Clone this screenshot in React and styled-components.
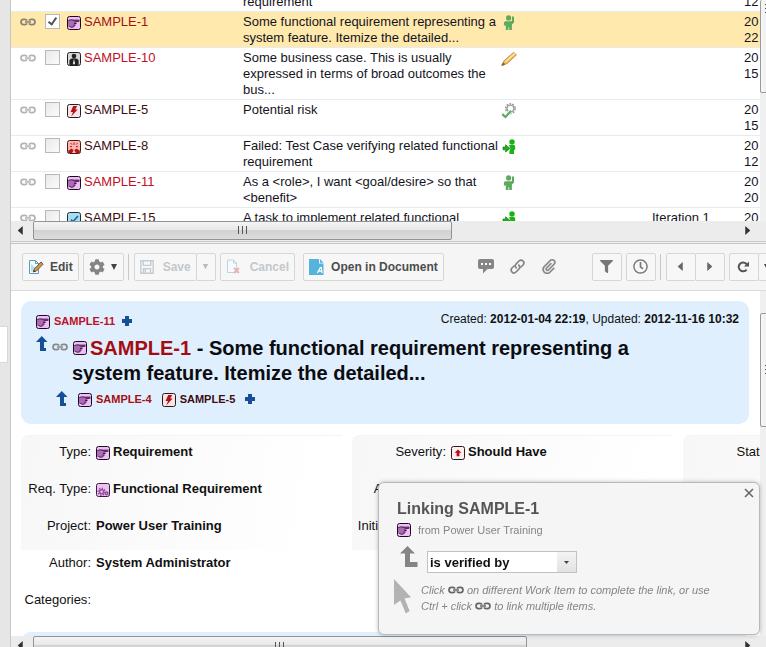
import React from "react";
import styled, { createGlobalStyle, css } from "styled-components";
import { ImAttachment } from "react-icons/im";
import { FaFilter, FaRegClock, FaCog } from "react-icons/fa";

const GlobalStyle = createGlobalStyle`
  *, *::before, *::after { box-sizing: border-box; }
  body {
    margin: 0;
    background: #fff;
    color: #111;
    font: 13px/16px "Liberation Sans", Arial, sans-serif;
  }
  button, input, select { font-family: inherit; margin: 0; }
  svg { display: block; flex: none; }
`;

/* ---------- shell ---------- */

const Page = styled.div`
  display: flex;
  height: 100vh;
  overflow: hidden;
`;

const Rail = styled.aside`
  flex: 0 0 11px;
  display: flex;
  flex-direction: column;
  background: #e6e6e6;
  border-right: 1px solid #c6c6c6;
  padding-top: 326px;
`;

const RailHandle = styled.button`
  width: 8px;
  height: 37px;
  padding: 0;
  border: 1px solid #d8d8d8;
  border-left: 0;
  background: #fff;
`;

const Main = styled.main`
  flex: 1;
  min-width: 0;
  display: flex;
  flex-direction: column;
  overflow: hidden;
`;

const ListPane = styled.section`
  flex: 243 1 0;
  min-height: 0;
  display: flex;
  flex-direction: column;
  border-bottom: 1px solid #c4c4c4;
`;

const DetailPane = styled.section`
  flex: 404 1 0;
  min-height: 0;
  display: flex;
  flex-direction: column;
`;

const PaneBody = styled.div`
  flex: 1;
  min-height: 0;
  display: flex;
`;

const Viewport = styled.div`
  flex: 1;
  min-width: 0;
  overflow: hidden;
  background: #fff;
`;

/* ---------- scroll bars ---------- */

const VTrack = styled.div`
  flex: 0 0 6px;
  background: #f0f0f0;
  padding-top: ${(p) => p.$start}px;
  overflow: hidden;
`;

const VThumb = styled.div`
  height: ${(p) => p.$size}px;
  width: 17px;
  display: flex;
  flex-direction: column;
  align-items: flex-start;
  justify-content: ${(p) => (p.$top ? "flex-start" : "center")};
  padding: ${(p) => (p.$top ? "3px" : "0")} 0 0 4px;
  border: 1px solid #9a9a9a;
  border-top-width: ${(p) => (p.$top ? 0 : 1)}px;
  border-radius: 2px;
  background: linear-gradient(to right, #f6f6f6, #e6e6e6);
`;

const HTrack = styled.div`
  flex: 0 0 ${(p) => p.$height}px;
  display: flex;
  background: #ececec;
  overflow: hidden;
  border-bottom: ${(p) => (p.$line ? "1px solid #c9c9c9" : "0")};
`;

const Seam = styled.div`
  flex: 0 0 1px;
  background: #f1f1f1;
`;

const ScrollButton = styled.button`
  flex: 0 0 22px;
  height: 19px;
  padding: 0 3px 0 0;
  border: 0;
  background: transparent;
  display: flex;
  align-items: center;
  justify-content: center;
`;

const HLane = styled.div`
  flex: 1;
  min-width: 0;
`;

const HThumb = styled.div`
  width: ${(p) => p.$size}%;
  height: 19px;
  display: flex;
  align-items: center;
  justify-content: center;
  border: 1px solid #8f9499;
  border-radius: 2px;
  background: linear-gradient(#f4f4f4 0, #e8e8e8 45%, #d2d2d2 50%, #dcdcdc 100%);
`;

const Corner = styled.div`
  flex: 0 0 6px;
`;

function Grip({ vertical }) {
  return (
    <svg width={vertical ? 8 : 11} height={vertical ? 11 : 8} stroke="#555" strokeWidth="1">
      <path d={vertical ? "M0 1.5H8M0 5.5H8M0 9.5H8" : "M1.5 0V8M5.5 0V8M9.5 0V8"} />
    </svg>
  );
}

function Triangle({ dir = "down", size = 8, color = "#333" }) {
  const d = {
    left: "M6 0 1.5 4 6 8Z",
    right: "M2 0 6.5 4 2 8Z",
    down: "M1 1H7L4 7Z",
  }[dir];
  return (
    <svg width={size} height={size} viewBox="0 0 8 8">
      <path d={d} fill={color} />
    </svg>
  );
}

function HScroll({ height, size, line }) {
  return (
    <HTrack $height={height} $line={line}>
      <ScrollButton aria-label="Scroll left">
        <Triangle dir="left" size={9} />
      </ScrollButton>
      <HLane>
        <HThumb $size={size}>
          <Grip />
        </HThumb>
      </HLane>
      <ScrollButton aria-label="Scroll right">
        <Triangle dir="right" size={9} />
      </ScrollButton>
      <Corner />
    </HTrack>
  );
}

/* ---------- icons ---------- */

function ChainIcon({ color = "#b3b3b3" }) {
  return (
    <svg width="16" height="8" viewBox="0 0 16 8" fill="none" stroke={color} strokeWidth="1.7">
      <path d="M7 2.6C6.6 1.6 5.8 1.4 4.8 1.4H3.6C1.9 1.4 1 2.6 1 4s.9 2.6 2.6 2.6h1.2C5.8 6.6 6.6 6.4 7 5.4" />
      <path d="M9 2.6C9.4 1.6 10.2 1.4 11.2 1.4h1.2C14.1 1.4 15 2.6 15 4s-.9 2.6-2.6 2.6h-1.2C10.2 6.6 9.4 6.4 9 5.4" />
      <path d="M5 4h6" strokeWidth="1.5" />
    </svg>
  );
}

const tiles = {
  requirement: ["#eebff4", "#1d0a22"],
  functional: ["#eac4f0", "#3d1b45"],
  business: ["#d6d6d6", "#222"],
  risk: ["#f6e6e6", "#2a1a1a"],
  test: ["#f9b8b4", "#5a1414"],
  task: ["#a8dcf2", "#17323f"],
  severity: ["#fbefef", "#2a1a1a"],
};

function TypeIcon({ kind }) {
  const [fill, edge] = tiles[kind];
  return (
    <svg width="14" height="14" viewBox="0 0 14 14">
      <rect x=".5" y=".5" width="13" height="13" rx="2" fill={fill} stroke={edge} />
      {kind === "requirement" && (
        <g>
          <path d="M1 4.2 3.4 4 5 3.6 12.4 4V5.2L9.4 5.8V7.2L8.4 8.8 7.2 10.4 4.6 11.4 1 10.4Z" fill="#ab6cb3" />
          <path d="M1.4 4.6 3.6 3.8 7 4.3 12.4 4.1M12.4 5.2 7.4 5.9M7 7.5H9.6M6.4 9.2H8.6M2.4 10.4 4.6 11.3 7.4 10.6" fill="none" stroke="#3b1442" strokeWidth=".9" />
        </g>
      )}
      {kind === "functional" && (
        <g fill="none" stroke="#98509f">
          <circle cx="5.6" cy="8.8" r="3.4" strokeWidth="1.6" strokeDasharray="1.4 1.2" />
          <circle cx="5.6" cy="8.8" r="2" strokeWidth="1.6" />
          <circle cx="10.6" cy="10.4" r="1.3" strokeWidth="1.6" />
        </g>
      )}
      {kind === "business" && (
        <g fill="#222">
          <circle cx="7" cy="4" r="2.3" />
          <path d="M2.4 13V8.8C2.6 7 4 6.2 7 6.2s4.4.8 4.6 2.6V13Z" />
          <path d="M7 7 5.9 11.4 7 12.8 8.1 11.4Z" fill="#eee" />
        </g>
      )}
      {kind === "risk" && <path d="M6.2 2H10.2L8.2 5.6H10.6L4.2 12.6 6 8H3.6Z" fill="#b80f16" />}
      {kind === "test" && (
        <g fill="none" stroke="#c01818">
          <path d="M3.5 3 5 4.6M7 2.4v2.4M10.5 3 9 4.6M3 6.6h2M9 6.6h2" strokeWidth="1" />
          <path d="M1.2 13v-2.2L4.6 8.4 6.6 10.2 5 13ZM12.8 13v-2.2L9.4 8.4 7.4 10.2 9 13Z" fill="#b01818" stroke="none" />
        </g>
      )}
      {kind === "task" && <path d="m4 7.5 2 2.2L11 4" fill="none" stroke="#246d92" strokeWidth="1.7" />}
      {kind === "severity" && <path d="M7 3.4 10.4 6.8H8.4v3.4H5.6V6.8H3.6Z" fill="#b80f16" />}
    </svg>
  );
}

function StatusIcon({ kind }) {
  return (
    <svg width="16" height="16" viewBox="0 0 16 16">
      {kind === "person" && (
        <g fill="#5cab5c">
          <circle cx="7.6" cy="2.9" r="2.6" />
          <path d="M4.6 6.2H10.6L11 5.6V1.6H13V7.4L10.9 9.4V15H8.2V12.2H7.4V15H4.8V10.6H2.9V7.6Q3.2 6.4 4.6 6.2Z" />
        </g>
      )}
      {kind === "pencil" && (
        <g>
          <path d="m1.8 13 .8-2.8L12.6 1.4l2.8 2.5L5.8 12.8Z" fill="#f0bc62" stroke="#c58a35" strokeWidth=".9" />
          <path d="m4.6 10.6 9-8" stroke="#fff0bd" strokeWidth="1.2" />
          <path d="M0 14.4 2 11.4l2.4 2.2-2.4 1.2Z" fill="#8a6238" />
        </g>
      )}
      {kind === "review" && (
        <g fill="none">
          <circle cx="9.4" cy="5.6" r="4.8" stroke="#999" strokeWidth="1.5" strokeDasharray="1.8 1.2" />
          <circle cx="9.4" cy="5.6" r="3.5" stroke="#999" strokeWidth="1.4" />
          <path d="M1.2 11.2 4.4 14 10.2 7.8" stroke="#fff" strokeWidth="3.6" />
          <path d="M1.2 11.2 4.4 14 10.2 7.8" stroke="#5fae61" strokeWidth="2.3" />
        </g>
      )}
      {kind === "assigned" && (
        <g fill="#19b219">
          <circle cx="11" cy="3" r="2.7" />
          <path d="M8 6H13.2Q14.2 6.4 14.2 8V10.8H13V15H8.4V12.4L9.4 9.6Z" />
          <path d="M2 8H4.6V5.8L9 9.4 4.6 13v-2.2H2Z" stroke="#117a11" strokeWidth=".7" />
        </g>
      )}
    </svg>
  );
}

function PlusIcon() {
  return (
    <svg width="10" height="10" viewBox="0 0 10 10">
      <path d="M3 0h4v3h3v4H7v3H3V7H0V3h3Z" fill="#174f96" />
    </svg>
  );
}

function UpArrow({ color = "#174f96", wide }) {
  return wide ? (
    <svg width="19" height="21" viewBox="0 0 19 21">
      <path d="M8.5 0 16 7.5H11V16H18.5v5H6V7.5H1Z" fill={color} />
    </svg>
  ) : (
    <svg width="12" height="15" viewBox="0 0 12 15">
      <path d="M5.8 0 11.5 6H8V12h2v3H4V6H0Z" fill={color} />
    </svg>
  );
}

function EditIcon() {
  return (
    <svg width="16" height="16" viewBox="0 0 16 16">
      <path d="M1.5 1.5h6l3 3v10h-9Z" fill="#f3fbff" stroke="#5c9dbd" />
      <path d="M7.5 1.5v3h3" fill="none" stroke="#5c9dbd" />
      <path d="M3 12.5V5l5 4-3 3.5Z" fill="#b9def0" />
      <path d="m5.5 12.8.8-2.8L13 3l2.2 2.1-6.8 7Z" fill="#cf9745" stroke="#66503a" strokeWidth=".9" />
      <path d="m5 13.3 1-2.3 1.4 1.5Z" fill="#333" />
    </svg>
  );
}

function SaveIcon() {
  return (
    <svg width="14" height="14" viewBox="0 0 14 14" fill="none" stroke="#c3ccd2" strokeWidth="1.4">
      <path d="M.8.8h12.4v12.4H.8Z" />
      <path d="M3.2 1v4.4h7.6V1M3.5 13V8.6h7V13M5.4 9v3.6" />
    </svg>
  );
}

function CancelIcon() {
  return (
    <svg width="14" height="15" viewBox="0 0 14 15" fill="none">
      <path d="M1.5 1h6l3 3v9.5h-9Z" fill="#f5fafc" stroke="#c3d3da" />
      <path d="M7.5 1v3h3" stroke="#c3d3da" />
      <path d="m8 9 5 5M13 9l-5 5" stroke="#e6b3b3" strokeWidth="1.8" />
    </svg>
  );
}

function DocumentIcon() {
  return (
    <svg width="15" height="16" viewBox="0 0 15 16">
      <path d="M0 0h10v4.6h4.5V16H0Z" fill="#56b3dc" />
      <path d="M11 0 14.5 3.8H11Z" fill="#56b3dc" />
      <path d="m8.4 14 2.9-5.4h1l.7 5.4M9.6 12.2h3.2" fill="none" stroke="#fff" strokeWidth="1.2" />
    </svg>
  );
}

function CommentIcon() {
  return (
    <svg width="16" height="15" viewBox="0 0 16 15">
      <path d="M2 0h12q2 0 2 2v6q0 2-2 2H9.5L5 14.5V10H2Q0 10 0 8V2Q0 0 2 0Z" fill="#858585" />
      <path d="M3 4h2v2H3ZM7 4h2v2H7ZM11 4h2v2h-2Z" fill="#fff" />
    </svg>
  );
}

function LinkIcon() {
  return (
    <svg width="15" height="15" viewBox="0 0 15 15" fill="none" stroke="#858585" strokeWidth="1.7" strokeLinecap="round">
      <path d="M6.2 8.8C5 7.6 5.1 6 6.2 4.9L9 2C10.2.8 11.8.8 12.9 1.9S14.1 4.8 13 6L11 8" />
      <path d="M8.8 6.2C10 7.4 9.9 9 8.8 10.1L6 13C4.8 14.2 3.2 14.2 2.1 13.1S.9 10.2 2 9L4 7" />
    </svg>
  );
}

function RefreshIcon() {
  return (
    <svg width="13" height="12" viewBox="0 0 13 12">
      <path d="M9.6 8.6A4.4 4.4 0 1 1 9.2 2.8L10 3.6" fill="none" stroke="#555" strokeWidth="2" />
      <path d="M12 .4V5.4H7Z" fill="#555" />
    </svg>
  );
}

function CursorIcon() {
  return (
    <svg width="18" height="35" viewBox="0 0 18 35">
      <path d="M0 0 17 18.2 10.6 19.5 15.6 32 11.8 34.5 6.4 21.6 0 26Z" fill="#b3b3b3" />
    </svg>
  );
}

/* ---------- work item list ---------- */

const Table = styled.table`
  table-layout: fixed;
  width: 828px;
  margin-top: -24px;
  border-collapse: separate;
  border-spacing: 0;
`;

const Row = styled.tr`
  background: ${(p) => (p.$selected ? "#ffe9ad" : "#fff")};
`;

const Cell = styled.td`
  padding: 2px 0 1px ${(p) => p.$inset || 0}px;
  border-bottom: 1px solid #e6ebee;
  vertical-align: top;
  color: #14141c;
`;

const IconSlot = styled.span`
  display: flex;
  padding-top: ${(p) => p.$top || 0}px;
`;

const Check = styled.input`
  appearance: none;
  display: block;
  width: 15px;
  height: 15px;
  border: 1px solid #b9b9b9;
  background: linear-gradient(135deg, #e9e9e9, #fbfbfb);

  &:checked { background: #fff; }
  &:checked::after {
    content: "";
    display: block;
    width: 5px;
    height: 9px;
    margin: 1px 0 0 4px;
    border: solid #555;
    border-width: 0 2px 2px 0;
    transform: rotate(35deg);
  }
`;

const tones = { red: "#c00f26", dark: "#a31014", maroon: "#3d0d12" };

const ItemLink = styled.a`
  display: inline-flex;
  align-items: center;
  gap: ${(p) => (p.$bold ? 4 : 3)}px;
  color: ${(p) => tones[p.$tone]};
  text-decoration: none;
  ${(p) => p.$bold && css`font-size: 11px; font-weight: bold;`}

  svg { margin-top: 2px; }
`;

const rows = [
  { id: "SAMPLE-4", kind: "requirement", tone: "dark", title: "A functional requirement that derives a new requirement", status: "person", date: ["20", "12"] },
  { id: "SAMPLE-1", kind: "requirement", tone: "dark", title: "Some functional requirement representing a system feature. Itemize the detailed...", status: "person", date: ["20", "22"], selected: true },
  { id: "SAMPLE-10", kind: "business", tone: "red", title: "Some business case. This is usually expressed in terms of broad outcomes the bus...", status: "pencil", date: ["20", "15"] },
  { id: "SAMPLE-5", kind: "risk", tone: "maroon", title: "Potential risk", status: "review", date: ["20", "15"] },
  { id: "SAMPLE-8", kind: "test", tone: "maroon", title: "Failed: Test Case verifying related functional requirement", status: "assigned", date: ["20", "12"] },
  { id: "SAMPLE-11", kind: "requirement", tone: "red", title: "As a <role>, I want <goal/desire> so that <benefit>", status: "person", date: ["20", "20"] },
  { id: "SAMPLE-15", kind: "task", tone: "maroon", title: "A task to implement related functional requirement", status: "assigned", iteration: "Iteration 1", date: ["20", "12"] },
];

function ItemTable() {
  return (
    <Table>
      <colgroup>
        {[34, 22, 176, 258, 151, 92, 95].map((w, i) => (
          <col key={i} width={w} />
        ))}
      </colgroup>
      <tbody>
        {rows.map((r) => (
          <Row key={r.id} $selected={r.selected}>
            <Cell $inset={9}>
              <IconSlot $top={4}>
                <ChainIcon color={r.selected ? "#8b8272" : undefined} />
              </IconSlot>
            </Cell>
            <Cell>
              <Check type="checkbox" aria-label={`Select ${r.id}`} defaultChecked={r.selected} />
            </Cell>
            <Cell>
              <ItemLink href="#" $tone={r.tone}>
                <TypeIcon kind={r.kind} />
                {r.id}
              </ItemLink>
            </Cell>
            <Cell>{r.title}</Cell>
            <Cell>
              <IconSlot $top={1}>
                <StatusIcon kind={r.status} />
              </IconSlot>
            </Cell>
            <Cell>{r.iteration}</Cell>
            <Cell>
              {r.date[0]}
              <br />
              {r.date[1]}
            </Cell>
          </Row>
        ))}
      </tbody>
    </Table>
  );
}

/* ---------- toolbar ---------- */

const Toolbar = styled.div`
  flex: none;
  display: flex;
  align-items: center;
  gap: 4px;
  padding: 9px 0 9px 11px;
  background: #f5f5f5;
  border-bottom: 1px solid #dcdcdc;
  overflow: hidden;
`;

const Button = styled.button`
  flex: none;
  display: flex;
  align-items: center;
  justify-content: center;
  gap: ${(p) => p.$gap || 6}px;
  min-width: 30px;
  height: 28px;
  padding: 0 ${(p) => (p.$icon ? 0 : 5)}px;
  border: 1px solid #d6d6d6;
  border-radius: 2px;
  background: #f7f7f7;
  color: #4d4d4d;
  font-size: 12px;
  font-weight: bold;
  white-space: nowrap;

  &:disabled { color: #c3c8cc; }
`;

const Joined = styled.div`
  flex: none;
  display: flex;

  ${Button} + ${Button} {
    margin-left: -1px;
    min-width: ${(p) => p.$tail || 30}px;
  }
`;

const PlainButton = styled.button`
  flex: none;
  display: flex;
  align-items: center;
  justify-content: center;
  width: 16px;
  padding: 0;
  border: 0;
  background: transparent;
  color: #858585;
`;

const PlainGroup = styled.div`
  flex: none;
  display: flex;
  align-items: center;
  gap: 16px;
  margin: 0 30px;
`;

const Divider = styled.span`
  flex: none;
  width: 1px;
  height: 26px;
  margin-right: 1px;
  background: #c8c8c8;
`;

const DocumentButton = styled(Button)`
  margin-left: 4px;
`;

function ActionBar() {
  return (
    <Toolbar role="toolbar" aria-label="Work item actions">
      <Button><EditIcon />Edit</Button>
      <Button $gap={5} aria-label="Actions">
        <FaCog size={16} color="#858585" />
        <Triangle color="#444" />
      </Button>
      <Divider />
      <Joined $tail={20}>
        <Button disabled $gap={9}><SaveIcon />Save</Button>
        <Button disabled $icon aria-label="Save options"><Triangle color="#bbb" size={7} /></Button>
      </Joined>
      <Button disabled $gap={10}><CancelIcon />Cancel</Button>
      <DocumentButton $gap={7}><DocumentIcon />Open in Document</DocumentButton>
      <PlainGroup>
        <PlainButton aria-label="Comments"><CommentIcon /></PlainButton>
        <PlainButton aria-label="Links"><LinkIcon /></PlainButton>
        <PlainButton aria-label="Attachments"><ImAttachment size={15} stroke="#858585" strokeWidth="0.4" /></PlainButton>
      </PlainGroup>
      <Button $icon aria-label="Filter"><FaFilter size={13} color="#777" /></Button>
      <Button $icon aria-label="History"><FaRegClock size={15} color="#777" /></Button>
      <Divider />
      <Joined>
        <Button $icon aria-label="Previous"><Triangle dir="left" size={9} color="#666" /></Button>
        <Button $icon aria-label="Next"><Triangle dir="right" size={9} color="#666" /></Button>
      </Joined>
      <Joined $tail={18}>
        <Button $icon aria-label="Refresh"><RefreshIcon /></Button>
        <Button $icon aria-label="Refresh options"><Triangle color="#444" /></Button>
      </Joined>
    </Toolbar>
  );
}

/* ---------- detail ---------- */

const Header = styled.header`
  margin: 10px 11px 11px 10px;
  padding: 10px 10px 15px 15px;
  border-radius: 10px;
  background: #dfeffd;
`;

const HeaderLine = styled.div`
  display: flex;
  align-items: center;
  gap: ${(p) => p.$gap || 7}px;
  height: 20px;
  padding-left: ${(p) => p.$indent || 0}px;
`;

const Dates = styled.p`
  margin: 0 0 4px auto;
  font-size: 12px;
  white-space: nowrap;
`;

const TitleRow = styled.div`
  display: flex;
  align-items: flex-start;
  gap: 4px;
  margin: 5px 0 3px;
`;

const Title = styled.h1`
  margin: 0;
  max-width: 600px;
  font-size: 20px;
  line-height: 25px;
  color: #0c0c10;

  a { color: #a30d12; text-decoration: none; }
  svg { display: inline-block; margin: 0 3px 0 1px; vertical-align: 0; }
`;

const Fields = styled.div`
  display: grid;
  grid-template-columns: repeat(3, minmax(321px, 1fr));
  gap: 10px;
  margin-left: 10px;
`;

const FieldCard = styled.dl`
  margin: 0;
  display: grid;
  grid-template-columns: ${(p) => p.$label}px 1fr;
  grid-auto-rows: 37px;
  column-gap: 5px;
  border-top: 1px solid #f3f3f3;
  border-radius: 8px 0 0 0;
  background: linear-gradient(100deg, #f7f7f7, #fff 90%) no-repeat 0 0 / 100% 114px;
`;

const Label = styled.dt`
  padding-top: 8px;
  text-align: right;
  white-space: nowrap;
`;

const Value = styled.dd`
  display: flex;
  gap: 3px;
  margin: 0;
  padding-top: 8px;
  font-weight: bold;
  white-space: nowrap;

  svg { margin-top: 2px; }
`;

const NextSection = styled.div`
  margin: 11px 11px 0 10px;
  height: 60px;
  border-radius: 10px;
  background: #dfeffd;
`;

function FieldGroup({ label, items }) {
  return (
    <FieldCard $label={label}>
      {items.map(([name, value, icon]) => (
        <React.Fragment key={name}>
          <Label>{name}:</Label>
          <Value>
            {icon && <TypeIcon kind={icon} />}
            {value}
          </Value>
        </React.Fragment>
      ))}
    </FieldCard>
  );
}

/* ---------- linking dialog ---------- */

const Dialog = styled.section`
  position: fixed;
  right: 6px;
  bottom: 12px;
  width: 382px;
  padding: 16px 18px 20px;
  border: 1px solid #b9b9b9;
  border-radius: 6px;
  background: #f5f5f5;
  box-shadow: 0 0 4px rgba(0, 0, 0, 0.25);
  color: #858585;
  font-size: 11px;
`;

const CloseButton = styled.button`
  position: absolute;
  top: 5px;
  right: 5px;
  padding: 0;
  border: 0;
  background: transparent;
`;

const DialogTitle = styled.h2`
  margin: 0;
  font-size: 16px;
  line-height: 20px;
  color: #555;
`;

const Source = styled.p`
  display: flex;
  gap: 7px;
  margin: 3px 0 0;

  svg { margin-top: 1px; }
`;

const RoleRow = styled.div`
  display: flex;
  align-items: flex-start;
  gap: 9px;
  margin: 5px 0 6px 2px;
`;

const SelectBox = styled.div`
  position: relative;
  width: 150px;
  margin-top: 8px;
`;

const Select = styled.select`
  appearance: none;
  display: block;
  width: 100%;
  height: 22px;
  padding: 0 22px 0 2px;
  border: 1px solid #c2c2c2;
  border-radius: 0;
  background: #fff;
  color: #111;
  font-size: 13px;
  font-weight: bold;
`;

const SelectArrow = styled.span`
  position: absolute;
  top: 1px;
  right: 1px;
  bottom: 1px;
  width: 19px;
  display: flex;
  align-items: center;
  justify-content: center;
  background: linear-gradient(#f4f4f4, #e2e2e2);
  pointer-events: none;
`;

const Hint = styled.div`
  display: flex;
  gap: 9px;
  margin-left: -3px;

  p { margin: 3px 0 0; font-style: italic; white-space: nowrap; }
  p svg { display: inline-block; vertical-align: 0; }
`;

function LinkingDialog() {
  return (
    <Dialog role="dialog" aria-label="Linking SAMPLE-1">
      <CloseButton aria-label="Close">
        <svg width="10" height="10" viewBox="0 0 10 10" stroke="#666" strokeWidth="1.6">
          <path d="m1 1 8 8M9 1 1 9" />
        </svg>
      </CloseButton>
      <DialogTitle>Linking SAMPLE-1</DialogTitle>
      <Source><TypeIcon kind="requirement" />from Power User Training</Source>
      <RoleRow>
        <IconSlot $top={3}><UpArrow wide color="#858585" /></IconSlot>
        <SelectBox>
          <Select aria-label="Link role" defaultValue="is verified by">
            <option>is verified by</option>
          </Select>
          <SelectArrow>
            <svg width="5" height="3"><path d="M0 0H5L2.5 3Z" fill="#444" /></svg>
          </SelectArrow>
        </SelectBox>
      </RoleRow>
      <Hint>
        <CursorIcon />
        <p>
          Click <ChainIcon color="#666" /> on different Work Item to complete the link, or use
          <br />
          Ctrl + click <ChainIcon color="#666" /> to link multiple items.
        </p>
      </Hint>
    </Dialog>
  );
}

export default function App() {
  return (
    <Page>
      <GlobalStyle />
      <Rail><RailHandle aria-label="Expand navigation" /></Rail>
      <Main>
        <ListPane>
          <PaneBody>
            <Viewport><ItemTable /></Viewport>
            <VTrack $start={0}><VThumb $size={93} $top><Grip vertical /></VThumb></VTrack>
          </PaneBody>
          <HScroll height={21} size={59.5} line />
          <Seam />
        </ListPane>
        <DetailPane>
          <ActionBar />
          <PaneBody>
            <Viewport>
              <Header>
                <HeaderLine>
                  <ItemLink href="#" $tone="red" $bold><TypeIcon kind="requirement" />SAMPLE-11</ItemLink>
                  <PlusIcon />
                  <Dates>Created: <b>2012-01-04 22:19</b>, Updated: <b>2012-11-16 10:32</b></Dates>
                </HeaderLine>
                <TitleRow>
                  <UpArrow />
                  <IconSlot $top={7}><ChainIcon color="#888" /></IconSlot>
                  <Title>
                    <TypeIcon kind="requirement" />
                    <a href="#">SAMPLE-1</a> - Some functional requirement representing a system feature. Itemize the detailed...
                  </Title>
                </TitleRow>
                <HeaderLine $indent={20} $gap={10}>
                  <UpArrow />
                  <ItemLink href="#" $tone="dark" $bold><TypeIcon kind="requirement" />SAMPLE-4</ItemLink>
                  <ItemLink href="#" $tone="maroon" $bold><TypeIcon kind="risk" />SAMPLE-5</ItemLink>
                  <PlusIcon />
                </HeaderLine>
              </Header>
              <Fields>
                <FieldGroup
                  label={70}
                  items={[
                    ["Type", "Requirement", "requirement"],
                    ["Req. Type", "Functional Requirement", "functional"],
                    ["Project", "Power User Training"],
                    ["Author", "System Administrator"],
                    ["Categories", ""],
                  ]}
                />
                <FieldGroup
                  label={94}
                  items={[
                    ["Severity", "Should Have", "severity"],
                    ["Assignee(s)", ""],
                    ["Initial Estimate", ""],
                  ]}
                />
                <FieldGroup label={94} items={[["Status", ""]]} />
              </Fields>
              <NextSection />
            </Viewport>
            <VTrack $start={22}><VThumb $size={114}><Grip vertical /></VThumb></VTrack>
          </PaneBody>
          <HScroll height={11} size={70} />
        </DetailPane>
      </Main>
      <LinkingDialog />
    </Page>
  );
}
